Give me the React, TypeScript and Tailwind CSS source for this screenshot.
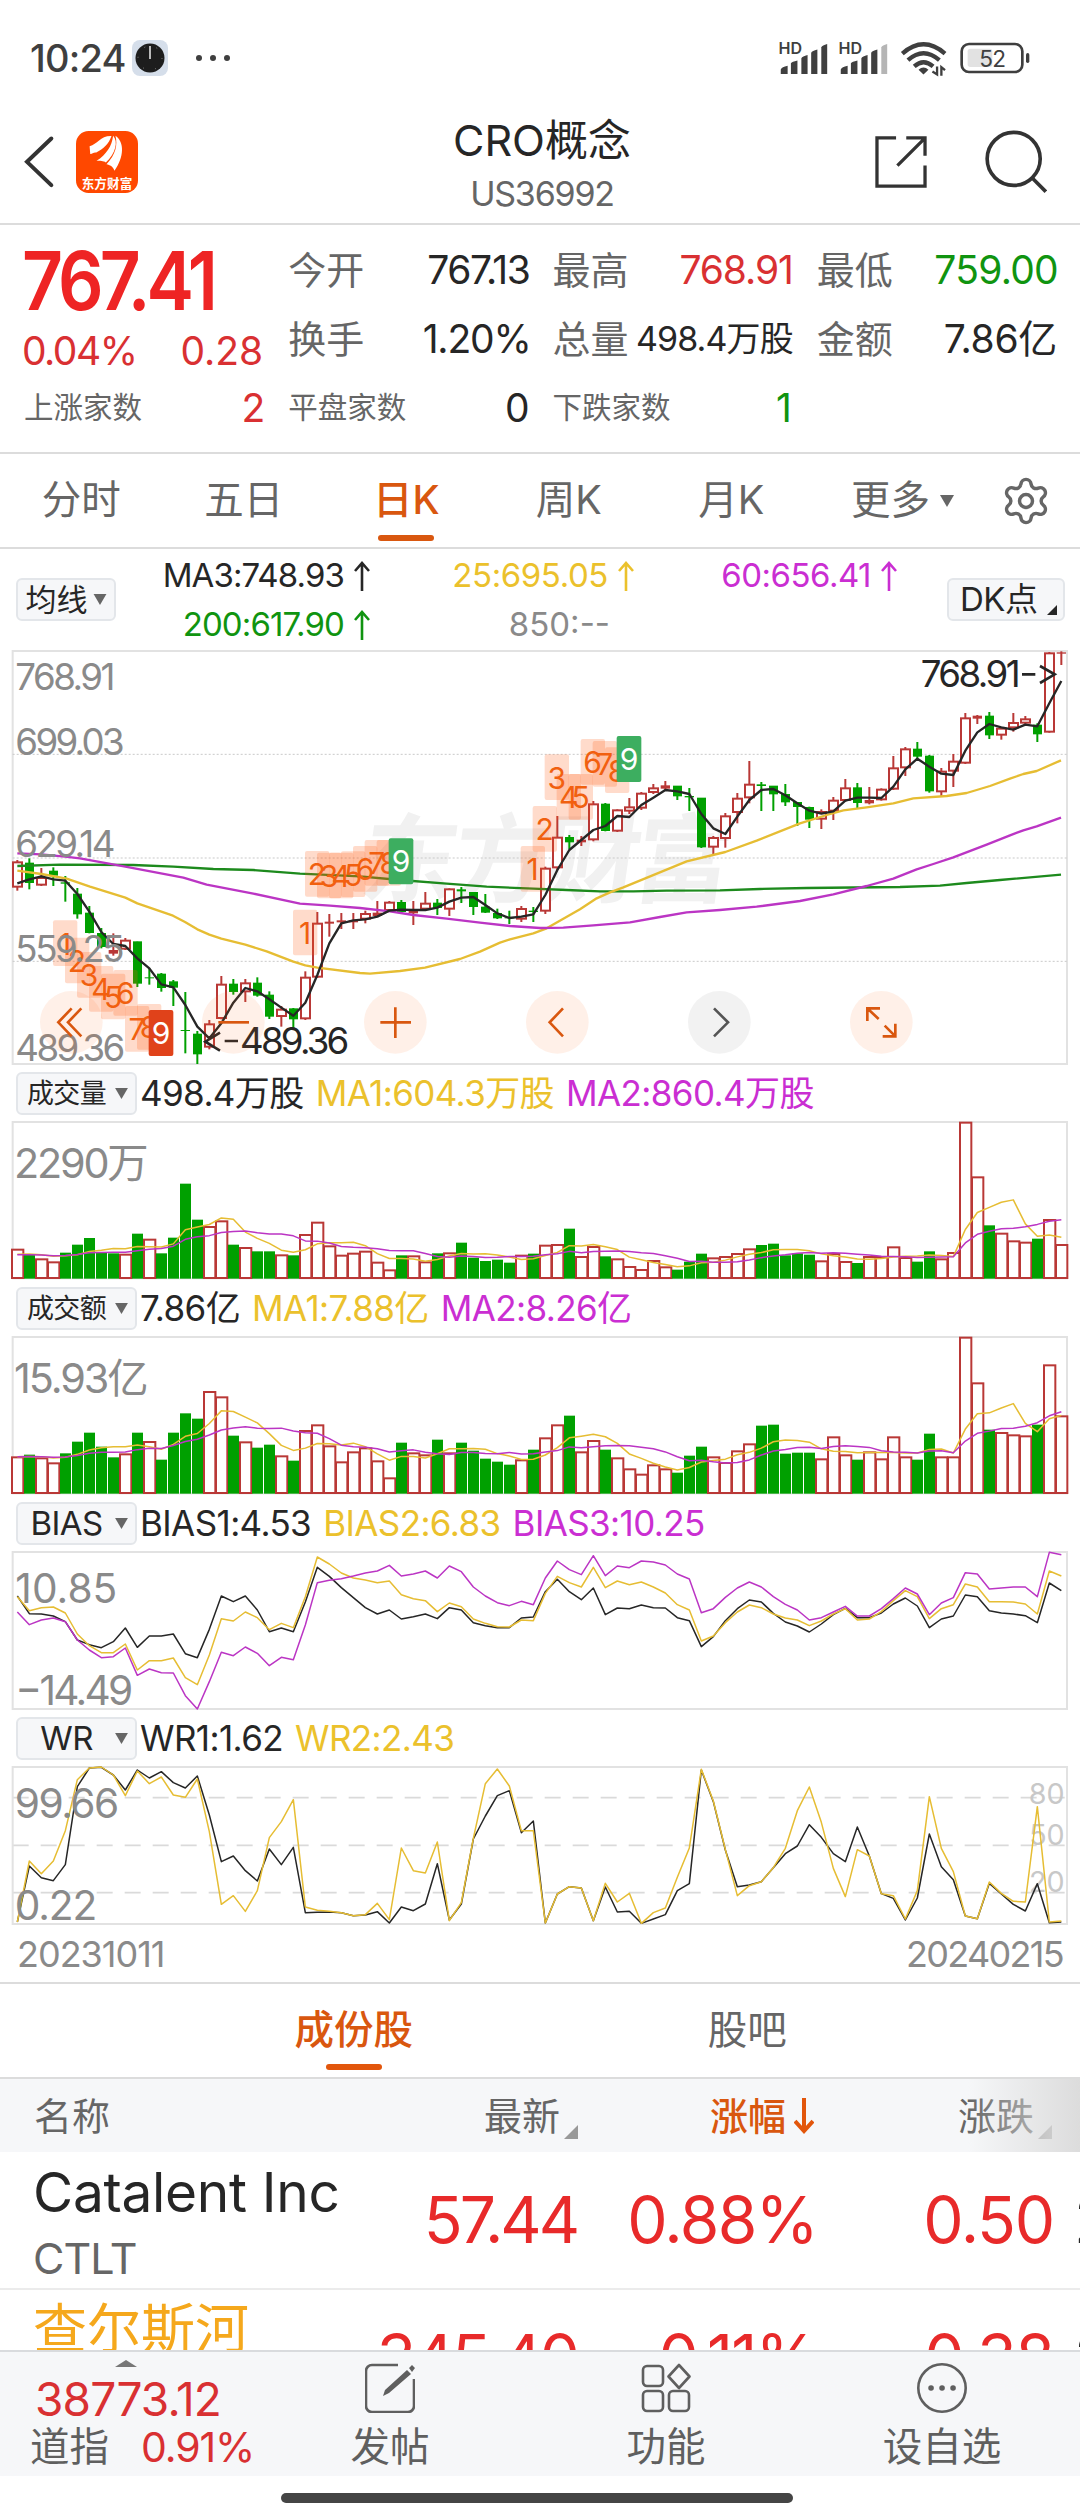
import type { ReactNode } from "react";
import { Settings } from "lucide-react";

const RED = "#b93836";
const GREEN = "#00a000";
const BLACK = "#262626";
const YELLOW = "#e6bd33";
const PURPLE = "#bb35c4";

// every pane is drawn at 3 units per pixel, one day every 36 units
const dayX = (i: number) => 52 + i * 36;

// [high, body top, body bottom, low, rising]
const candles = [
  [660, 665, 742, 752, 1], [655, 669, 728, 748, 0], [684, 712, 736, 738, 1], [682, 693, 706, 738, 0],
  [708, 727, 731, 785, 0], [744, 762, 822, 836, 0], [798, 819, 878, 880, 0], [864, 880, 920, 925, 0],
  [880, 930, 941, 947, 1], [894, 900, 928, 930, 1], [905, 905, 1030, 1041, 0], [985, 1012, 1014, 1034, 0],
  [999, 1002, 1043, 1055, 0], [1020, 1025, 1042, 1098, 0], [1056, 1170, 1173, 1240, 0], [1173, 1182, 1242, 1272, 0],
  [1140, 1151, 1222, 1228, 1], [1008, 1032, 1136, 1138, 1], [1017, 1032, 1055, 1064, 0], [1017, 1028, 1056, 1086, 1],
  [1012, 1029, 1066, 1070, 0], [1054, 1065, 1129, 1137, 0], [1098, 1107, 1130, 1160, 1], [1104, 1106, 1137, 1165, 0],
  [994, 1011, 1137, 1140, 1], [816, 849, 1012, 1014, 1], [822, 845, 851, 890, 1], [819, 841, 847, 867, 1],
  [819, 841, 847, 867, 1], [812, 820, 838, 850, 1], [783, 818, 828, 830, 1], [783, 786, 812, 815, 1],
  [780, 787, 815, 820, 0], [783, 812, 820, 855, 1], [756, 789, 808, 810, 1], [777, 789, 803, 825, 0],
  [745, 746, 808, 828, 1], [741, 748, 754, 789, 0], [756, 757, 800, 825, 0], [762, 801, 817, 819, 0],
  [806, 820, 834, 837, 0], [812, 832, 835, 852, 0], [798, 805, 838, 846, 1], [801, 812, 816, 846, 0],
  [680, 684, 814, 822, 1], [528, 591, 684, 690, 1], [585, 592, 606, 628, 0], [588, 599, 607, 618, 1],
  [483, 491, 600, 604, 1], [489, 492, 572, 574, 0], [508, 509, 574, 576, 1], [474, 500, 514, 522, 1],
  [456, 459, 505, 510, 1], [432, 443, 458, 462, 1], [423, 436, 446, 450, 1], [438, 438, 468, 480, 0],
  [444, 468, 472, 513, 0], [474, 474, 621, 624, 0], [588, 592, 622, 643, 1], [519, 527, 596, 623, 1],
  [459, 474, 518, 550, 1], [363, 432, 474, 490, 1], [426, 433, 438, 513, 0], [438, 438, 462, 513, 0],
  [432, 463, 486, 498, 0], [486, 487, 500, 558, 0], [500, 502, 538, 564, 0], [508, 514, 538, 567, 1],
  [471, 480, 514, 540, 1], [417, 443, 482, 485, 1], [429, 443, 488, 506, 0], [441, 480, 490, 493, 1],
  [445, 447, 480, 482, 1], [348, 383, 448, 450, 1], [321, 326, 384, 408, 1], [306, 327, 349, 356, 0],
  [345, 348, 453, 458, 0], [384, 393, 456, 470, 1], [342, 363, 394, 441, 1], [219, 233, 370, 372, 1],
  [225, 227, 236, 252, 1], [216, 228, 285, 297, 0], [262, 264, 286, 299, 1], [219, 247, 264, 275, 1],
  [228, 236, 250, 257, 1], [250, 255, 282, 306, 0], [36, 38, 277, 278, 1], [34, 37, 41, 75, 1],
];

const ma3 = [
  730, 718, 709, 718, 722, 762, 815, 876, 912, 918, 955, 985, 1033, 1042, 1095, 1160, 1195, 1150, 1088, 1044, 1054, 1078,
  1103, 1127, 1088, 1005, 910, 850, 841, 838, 830, 812, 809, 810, 810, 803, 785, 773, 771, 795, 820, 834, 830, 823, 765,
  690, 630, 600, 570, 558, 528, 531, 495, 473, 450, 454, 462, 522, 565, 582, 530, 480, 450, 447, 466, 490, 512, 521, 514,
  482, 473, 473, 474, 440, 388, 356, 380, 401, 405, 332, 277, 252, 262, 269, 254, 259, 190, 123,
];
const ma25 =
  "52,692 124,702 200,716 270,740 376,773 412,790 519,827 555,846 592,868 628,884 664,896 736,914 800,934 880,965 916,976 952,983 1080,999 1110,1001 1200,993 1275,983 1380,957 1440,935 1500,908 1530,898 1600,880 1640,865 1740,808 1790,775 1830,757 1870,742 2060,664 2176,636 2270,602 2400,550 2480,525 2530,511 2600,502 2680,490 2740,475 2840,468 2900,459 2970,438 3030,416 3070,402 3110,393 3183,361";
const ma60 =
  "52,640 124,643 195,650 240,655 376,680 550,713 620,734 760,761 900,791 990,797 1080,804 1170,814 1240,825 1340,836 1440,848 1530,858 1620,864 1690,863 1780,856 1890,847 1980,831 2060,817 2160,810 2270,800 2400,783 2500,763 2600,738 2680,716 2750,688 2800,672 2860,652 2960,614 3030,586 3070,571 3110,559 3183,533";
const ma200 =
  "52,678 180,674 400,675 520,680 640,687 760,690 900,701 1080,709 1200,720 1340,731 1460,740 1600,746 1700,750 1800,754 1900,754 2000,752 2160,751 2280,747 2420,744 2700,741 2820,737 2900,729 3000,720 3183,704";

// sequence marks: [x, y, digit]
const marks: [number, number, number][] = [
  [159, 841, 1], [195, 893, 2], [231, 936, 3], [267, 978, 4], [303, 1001, 5], [340, 990, 6], [375, 1098, 7], [411, 1092, 8],
  [879, 809, 1], [915, 633, 2], [951, 638, 3], [987, 638, 4], [1023, 634, 5], [1059, 618, 6], [1094, 600, 7], [1130, 600, 8],
  [1562, 618, 1], [1598, 498, 2], [1634, 343, 3], [1670, 402, 4], [1706, 402, 5], [1742, 297, 6], [1778, 303, 7], [1815, 322, 8],
];

const rising = [
  1, 0, 1, 1, 0, 0, 0, 0, 0, 1, 0, 1, 0, 0, 0, 0, 1, 1, 0, 1, 0, 0, 1, 0, 1, 1, 1, 1, 1, 1, 1, 1, 0, 1, 1, 0, 1, 0, 0, 0, 0, 0,
  1, 0, 1, 1, 0, 1, 1, 0, 1, 1, 1, 1, 1, 0, 0, 0, 1, 1, 1, 1, 0, 0, 0, 0, 0, 1, 1, 1, 0, 1, 1, 1, 1, 0, 0, 1, 1, 1, 1, 0, 1, 1,
  1, 0, 1, 1,
];
const volume = [
  538, 555, 567, 576, 549, 525, 505, 548, 551, 553, 492, 508, 551, 504, 342, 450, 470, 453, 525, 533, 545, 545, 555, 557,
  494, 457, 528, 556, 550, 544, 577, 600, 557, 558, 576, 551, 549, 519, 564, 574, 570, 579, 556, 552, 526, 524, 477, 560,
  530, 560, 567, 590, 599, 572, 591, 600, 576, 552, 564, 560, 551, 537, 526, 522, 557, 551, 555, 573, 551, 575, 580, 560,
  560, 531, 563, 576, 545, 567, 548, 157, 321, 467, 490, 513, 517, 507, 449, 524,
];
const amount = [
  1161, 1155, 1164, 1179, 1151, 1116, 1089, 1131, 1163, 1152, 1089, 1115, 1170, 1089, 1031, 1047, 965, 981, 1098, 1116,
  1134, 1125, 1158, 1173, 1082, 1065, 1128, 1176, 1146, 1134, 1173, 1224, 1119, 1149, 1155, 1110, 1149, 1119, 1143, 1167,
  1176, 1185, 1170, 1140, 1104, 1065, 1038, 1146, 1112, 1140, 1164, 1197, 1213, 1185, 1197, 1209, 1158, 1131, 1161, 1178,
  1143, 1122, 1068, 1065, 1152, 1149, 1149, 1167, 1101, 1155, 1170, 1146, 1167, 1101, 1161, 1170, 1092, 1161, 1161, 802,
  939, 1080, 1088, 1095, 1098, 1065, 885, 1038,
];

const bias1 = [
  288, 341, 342, 348, 365, 420, 434, 443, 425, 384, 442, 408, 408, 402, 461, 473, 388, 288, 305, 288, 330, 395, 384, 395,
  306, 202, 229, 263, 293, 323, 342, 330, 357, 350, 342, 356, 323, 330, 368, 377, 383, 383, 354, 351, 275, 238, 275, 299,
  264, 344, 324, 326, 315, 323, 324, 353, 362, 440, 410, 362, 326, 300, 306, 340, 366, 378, 396, 372, 344, 325, 353, 353,
  339, 312, 294, 318, 383, 357, 348, 285, 290, 332, 339, 342, 347, 368, 249, 272,
];
const bias2 = [
  290, 332, 323, 321, 339, 402, 437, 458, 458, 432, 510, 482, 482, 474, 533, 554, 465, 356, 363, 336, 353, 389, 370, 383,
  290, 171, 192, 219, 234, 240, 248, 243, 284, 296, 302, 335, 309, 320, 357, 370, 380, 381, 360, 362, 280, 229, 248, 261,
  202, 263, 243, 254, 246, 261, 279, 314, 330, 423, 408, 368, 336, 315, 323, 342, 354, 360, 377, 363, 342, 326, 360, 357,
  335, 302, 272, 290, 356, 326, 314, 252, 261, 305, 305, 306, 312, 342, 213, 228,
];
const bias3 = [
  336, 374, 360, 354, 365, 420, 450, 473, 470, 444, 526, 507, 518, 519, 587, 627, 545, 457, 467, 441, 460, 497, 472, 479,
  375, 248, 241, 236, 228, 219, 213, 196, 228, 222, 213, 234, 198, 215, 261, 288, 308, 317, 304, 314, 234, 183, 209, 224,
  167, 227, 198, 203, 183, 186, 195, 222, 237, 338, 326, 292, 264, 246, 261, 290, 313, 330, 360, 353, 336, 319, 348, 348,
  326, 296, 264, 282, 344, 309, 293, 218, 222, 267, 264, 261, 261, 290, 157, 164,
];
const wr1 = [
  1266, 1098, 1133, 1142, 1094, 860, 804, 802, 825, 870, 810, 834, 815, 848, 864, 828, 945, 1085, 1068, 1112, 1143, 1047,
  1094, 1042, 1238, 1237, 1236, 1238, 1247, 1245, 1235, 1269, 1221, 1232, 1212, 1091, 1260, 1212, 1017, 948, 887, 872, 998,
  963, 1269, 1182, 1160, 1164, 1262, 1161, 1236, 1234, 1270, 1257, 1244, 1172, 1151, 810, 905, 1050, 1160, 1155, 1145,
  1103, 1061, 1038, 974, 1012, 1061, 1085, 981, 1068, 1181, 1195, 1260, 1194, 1002, 1100, 1139, 1248, 1256, 1150, 1182,
  1213, 1233, 1151, 1268, 1266,
];
const wr2 = [
  1266, 1083, 1121, 1083, 992, 839, 804, 801, 825, 887, 813, 851, 831, 885, 892, 837, 995, 1213, 1187, 1234, 1172, 1013,
  965, 899, 1221, 1231, 1234, 1238, 1247, 1244, 1210, 1259, 1044, 1112, 1119, 1026, 1262, 1208, 1015, 851, 807, 858, 992,
  992, 1269, 1182, 1160, 1164, 1262, 1150, 1206, 1180, 1270, 1238, 1224, 1132, 1044, 808, 903, 1048, 1187, 1157, 1145,
  1103, 1045, 932, 861, 967, 1105, 1190, 1049, 1068, 1181, 1187, 1257, 1172, 890, 1045, 1115, 1248, 1256, 1146, 1180,
  1204, 1206, 920, 1266, 1263,
];

const points = (ys: number[]) => ys.map((y, i) => `${dayX(i)},${y}`).join(" ");

// rolling mean, padded in front with the level before the first visible day
const average = (ys: number[], n: number, before: number) =>
  ys.map((_, i) => {
    let sum = 0;
    for (let k = i - n + 1; k <= i; k++) sum += k < 0 ? before : ys[k];
    return sum / n;
  });

const Line = ({ d, color, width = 4.5 }: { d: string; color: string; width?: number }) => (
  <polyline points={d} fill="none" stroke={color} strokeWidth={width} strokeLinejoin="round" />
);

const Label = ({ x, y, w, children, color = "#8a8a8a", size = 110 }: {
  x: number; y: number; w: number; children: string; color?: string; size?: number;
}) => (
  <text x={x} y={y} fontSize={size} fill={color} textLength={w}>
    {children}
  </text>
);

const Frame = ({ top, bottom }: { top: number; bottom: number }) => (
  <rect x={38} y={top} width={3163} height={bottom - top} fill="none" stroke="#e2e2e2" strokeWidth={6} />
);

const DownTriangle = ({ className }: { className: string }) => (
  <svg viewBox="0 0 14 12" className={className} fill="#666">
    <path d="M0 0h14L7 12z" />
  </svg>
);

const CornerTriangle = ({ className }: { className: string }) => (
  <svg viewBox="0 0 14 14" className={className} fill="currentColor">
    <path d="M14 0v14H0z" />
  </svg>
);

const Signal = ({ weak }: { weak?: boolean }) => (
  <svg viewBox="54 60 150 104" className="h-[34px] w-[50px]" fill="#3f3f3f">
    <text x={54} y={101} fontSize={47} fontWeight={600} textLength={72} lengthAdjust="spacingAndGlyphs">
      HD
    </text>
    <path d="M61 161v-14q3-7 21-11v25z M92 161v-33q3-4 20-8v41z M124 161v-48q3-6 19-10v58z M154 161V96q3-6 19-10v75z" />
    <path d="M185 161V79q3-6 18-10v92z" fill={weak ? "#b5b5b5" : "#3f3f3f"} />
  </svg>
);

const StatusBar = () => (
  <div className="flex h-[108px] items-center justify-between pt-2 pr-[50px] pl-[30px]">
    <div className="flex items-center">
      <span className="text-[38px] leading-none font-medium tracking-[-0.8px] text-[#3f3f3f]">10:24</span>
      <svg viewBox="0 0 36 36" className="ml-[6px] h-9 w-9">
        <rect width="36" height="36" rx="8" fill="#d5deea" />
        <circle cx="18" cy="18" r="14.5" fill="#1d1d1d" />
        <circle cx="18" cy="18" r="12" fill="none" stroke="#888" strokeWidth="1" strokeDasharray="1 11.57" />
        <path d="M18 6v13" stroke="#bbb" strokeWidth="2" />
      </svg>
      <svg viewBox="0 0 34 6" className="ml-7 h-[6px] w-[34px]" fill="#3f3f3f">
        <circle cx="3" cy="3" r="3" />
        <circle cx="17" cy="3" r="3" />
        <circle cx="31" cy="3" r="3" />
      </svg>
    </div>
    <div className="flex items-center">
      <Signal />
      <span className="w-[10px]" />
      <Signal weak />
      <svg viewBox="420 62 142 110" className="ml-[12px] h-[37px] w-[47px]" fill="none" stroke="#3f3f3f" strokeWidth="13">
        <path d="M427 102q64-56 129 0M444 122q47-42 95 0M463 141q28-25 57 0" />
        <path d="M476 151q15-13 30 0l-15 14z" fill="#3f3f3f" stroke="none" />
        <path d="M532 141v24l-14-9M545 169v-26l11 9" strokeWidth="7" />
      </svg>
      <svg viewBox="604 66 210 96" className="ml-[13px] h-8 w-[70px]">
        <rect x="609" y="72" width="182" height="84" rx="22" fill="none" stroke="#3f3f3f" strokeWidth="8" />
        <rect x="627" y="86" width="74" height="55" rx="8" fill="#e2e2e2" />
        <rect x="802" y="99" width="10" height="30" rx="5" fill="#3f3f3f" />
        <text x="701" y="140" fontSize="68" textAnchor="middle" fill="#3f3f3f" letterSpacing="-2">
          52
        </text>
      </svg>
    </div>
  </div>
);

const Header = () => (
  <div className="flex h-[117px] items-center justify-between border-b-2 border-[#dcdcdc] pr-[33px] pl-[23px]">
    <div className="mb-2 flex w-[302px] items-center">
      <svg viewBox="70 346 96 158" className="h-[53px] w-8" fill="none" stroke="#333" strokeWidth="12" strokeLinecap="round">
        <path d="M155 356L82 426l73 70" />
      </svg>
      <svg viewBox="0 0 187 187" className="ml-[21px] h-[62px] w-[62px]" fill="#fff">
        <rect width="187" height="187" rx="38" fill="#ff4800" />
        <path d="M41 46c24-6 32-32 66-31-8 24-24 38-46 50-8-2-14 6-18 4z" />
        <path d="M62 90c30-20 46-44 50-76 16 18 8 52-22 81-7-6-18-3-28-5z" />
        <path d="M92 100c28-30 34-58 27-86 28 20 26 64-3 106-4-14-14-18-24-20z" />
        <text x="17" y="172" fontSize="38" fontWeight="700" textLength="153">
          东方财富
        </text>
      </svg>
    </div>
    <div className="pt-[3px] text-center leading-[53px]">
      <div className="text-[43px] text-[#262626]">CRO概念</div>
      <div className="text-[34px] tracking-[-1.2px] text-[#666]">US36992</div>
    </div>
    <div className="mb-2 flex w-[288px] items-center justify-end gap-[58px]">
      <svg viewBox="346 346 158 158" className="h-[52px] w-[52px]" fill="none" stroke="#333" strokeWidth="10">
        <path d="M410 352h-58v146h146v-62M441 352h57v54M497 353l-83 83" />
      </svg>
      <svg viewBox="678 328 186 190" className="h-[63px] w-[62px]" fill="none" stroke="#333" strokeWidth="11">
        <circle cx="764" cy="415" r="80" />
        <path d="M820 473l41 41" />
      </svg>
    </div>
  </div>
);

const Stat = ({ label, value, small }: { label: string; value: ReactNode; small?: boolean }) => (
  <div className="flex h-[69px] items-center justify-between whitespace-nowrap text-[#262626]">
    <span className={small ? "text-[29.5px] text-[#666]" : "text-[38px] text-[#666]"}>{label}</span>
    {value}
  </div>
);

const Quote = () => (
  <div className="grid h-[229px] grid-cols-4 gap-x-[25px] border-b-2 border-[#dcdcdc] px-6 pt-[10px] text-[39px] leading-none">
    <div className="text-[#d93032]">
      <div className="flex h-[93px] items-center">
        <span className="-ml-[2px] origin-left scale-x-[0.88] text-[81px] font-semibold tracking-[-4.5px] text-[#ee2424]">
          767.41
        </span>
      </div>
      <div className="flex h-[45px] items-center justify-between">
        <span className="-ml-[2px] tracking-[-1.5px]">0.04%</span>
        <span>0.28</span>
      </div>
      <Stat small label="上涨家数" value={<span className="-mr-[2px] text-[#d93032]">2</span>} />
    </div>
    <div>
      <Stat label="今开" value={<span className="-mr-[2px] tracking-[-1.4px]">767.13</span>} />
      <Stat label="换手" value={<span className="-mr-[3px] tracking-[-1.2px]">1.20%</span>} />
      <Stat small label="平盘家数" value={<span className="-mr-[2px]">0</span>} />
    </div>
    <div>
      <Stat label="最高" value={<span className="-mr-px tracking-[-1.1px] text-[#d93032]">768.91</span>} />
      <Stat label="总量" value={<span className="-mr-px text-[34px] tracking-[-0.9px]">498.4万股</span>} />
      <Stat small label="下跌家数" value={<span className="text-[#109410]">1</span>} />
    </div>
    <div>
      <Stat label="最低" value={<span className="-mr-[2px] tracking-[-0.7px] text-[#109410]">759.00</span>} />
      <Stat label="金额" value={<span className="-mr-px tracking-[-0.3px]">7.86亿</span>} />
    </div>
  </div>
);

const PeriodTabs = () => (
  <div className="flex h-[95px] items-center border-b-2 border-[#dcdcdc] text-[39.5px] leading-none text-[#666]">
    {["分时", "五日", "日K", "周K", "月K"].map((t) => (
      <div
        key={t}
        className={
          t === "日K"
            ? "relative flex h-full w-[162.5px] items-center justify-center font-medium text-[#d9570f]"
            : "flex h-full w-[162.5px] items-center justify-center"
        }
      >
        {t}
        {t === "日K" && <span className="absolute bottom-[6px] h-[6px] w-14 rounded-full bg-[#d9570f]" />}
      </div>
    ))}
    <div className="flex w-[180px] items-center justify-center gap-[10px]">
      更多
      <DownTriangle className="h-3 w-[14px]" />
    </div>
    <Settings className="ml-[7px] h-[52px] w-[52px]" strokeWidth={1.6} />
  </div>
);

const UpArrow = () => (
  <svg viewBox="0 0 16 30" className="ml-[10px] h-[30px] w-4" fill="none" stroke="currentColor" strokeWidth="2.6">
    <path d="M8 30V2M1 10l7-8 7 8" />
  </svg>
);

const MaLegend = () => (
  <div className="flex h-[101px] items-center pl-4 text-[33px] leading-none text-[#262626]">
    <div className="flex h-[43px] w-[100px] items-center justify-center gap-[5px] rounded-md border-2 border-[#e3e6ea] bg-[#f6f7f9] text-[31px]">
      均线
      <DownTriangle className="h-[11px] w-[14px]" />
    </div>
    <div className="grid grid-cols-[254px_264px_263px] pt-px whitespace-nowrap">
      <div className="flex h-[49px] items-center justify-end tracking-[-0.9px]">
        MA3:748.93
        <UpArrow />
      </div>
      <div className="flex h-[49px] items-center justify-end tracking-[-0.4px] text-[#ebc12c]">
        25:695.05
        <UpArrow />
      </div>
      <div className="flex h-[49px] items-center justify-end tracking-[-0.5px] text-[#ca2ed2]">
        60:656.41
        <UpArrow />
      </div>
      <div className="flex h-[49px] items-center justify-end tracking-[-0.9px] text-[#109410]">
        200:617.90
        <UpArrow />
      </div>
      <div className="flex h-[49px] items-center justify-end pr-[24px] text-[#8a8a8a]">850:--</div>
    </div>
    <div className="ml-[50px] flex h-[43px] w-[118px] items-center rounded-md border-2 border-[#e3e6ea] bg-[#f6f7f9] pl-[11px]">
      <span className="tracking-[-0.5px]">DK点</span>
      <CornerTriangle className="mt-5 ml-[9px] h-[10px] w-[10px]" />
    </div>
  </div>
);

const ChartButton = ({ x, gray, children }: { x: number; gray?: boolean; children: ReactNode }) => (
  <g transform={`translate(${x} 1147)`} fill="none" stroke={gray ? "#555" : "#d9570f"} strokeWidth={8}>
    <circle r={94} fill={gray ? "#808080" : "#ff6e1e"} fillOpacity={0.1} stroke="none" />
    {children}
  </g>
);

const MainChart = () => (
  <svg viewBox="0 30 3240 1248" className="block h-[416px] w-full">
    <text x={1180} y={765} fontSize={290} fontWeight={700} fill="#f1f1f1" textLength={1110} transform="skewX(-8)">
      东方财富
    </text>
    <Frame top={33} bottom={1272} />
    {[343, 654, 964].map((y) => (
      <path key={y} d={`M38 ${y}H3201`} stroke="#c9c9c9" strokeWidth={3} strokeDasharray="6 6" />
    ))}
    {candles.map(([high, top, bottom, low, up], i) => (
      <g key={i} stroke={up ? RED : GREEN} strokeWidth={6}>
        <path d={`M${dayX(i)} ${high}V${low}`} />
        {bottom - top < 12 ? (
          <rect x={dayX(i) - 14} y={top} width={28} height={Math.max(bottom - top, 3)} stroke="none" fill={up ? RED : GREEN} />
        ) : (
          <rect
            x={dayX(i) - (up ? 13 : 10)}
            y={top + 2}
            width={up ? 27 : 21}
            height={bottom - top - 4}
            fill={up ? "#fff" : GREEN}
          />
        )}
      </g>
    ))}
    <Line d={ma200} color="#1d8a1d" width={7} />
    <Line d={ma25} color={YELLOW} width={7} />
    <Line d={ma60} color={PURPLE} width={7} />
    <Line d={points(ma3)} color={BLACK} width={7} />
    {marks.map(([x, y, n], i) => (
      <g key={i}>
        <rect x={x} y={y} width={73} height={137} rx={6} fill="#ff5a14" fillOpacity={0.22} />
        <text x={x + 36} y={y + 103} fontSize={90} textAnchor="middle" fill="#f0600f">
          {n}
        </text>
      </g>
    ))}
    {[[446, 1110, "#e0421a"], [1166, 595, "#3dae60"], [1850, 288, "#3dae60"]].map(([x, y, c]) => (
      <g key={x}>
        <rect x={x} y={y} width={74} height={138} rx={6} fill={c as string} />
        <text x={Number(x) + 37} y={Number(y) + 102} fontSize={90} textAnchor="middle" fill="#fff">
          9
        </text>
      </g>
    ))}
    <Label x={46} y={150} w={300}>768.91</Label>
    <Label x={46} y={345} w={328}>699.03</Label>
    <Label x={46} y={652} w={300}>629.14</Label>
    <Label x={46} y={966} w={328}>559.25</Label>
    <Label x={46} y={1263} w={330}>489.36</Label>
    <Label x={720} y={1243} w={328} color={BLACK}>489.36</Label>
    <path d="M660 1178l-44 27 44 27M674 1203h40" stroke={BLACK} strokeWidth={8} fill="none" />
    <Label x={2762} y={142} w={300} color={BLACK}>768.91</Label>
    <path d="M3120 78l44 25-44 26M3066 103h40" stroke={BLACK} strokeWidth={8} fill="none" />
    <ChartButton x={214}>
      <path d="M1-42l-40 42 40 42M30-42l-40 42 40 42" />
    </ChartButton>
    <ChartButton x={700}>
      <path d="M-45 0h92" />
    </ChartButton>
    <ChartButton x={1186}>
      <path d="M-45 0h92M0-45v92" />
    </ChartButton>
    <ChartButton x={1672}>
      <path d="M17-42l-40 42 40 42" />
    </ChartButton>
    <ChartButton x={2158} gray>
      <path d="M-16-42l42 42-42 42" />
    </ChartButton>
    <ChartButton x={2644}>
      <path d="M-4-42h-38v38M-40-40l32 30M4 42h38V4M40 40L10 10" />
    </ChartButton>
  </svg>
);

const BarPane = ({ tops, base, before, max }: { tops: number[]; base: number; before: number; max: string }) => (
  <svg viewBox={`0 ${base - 475} 3240 483`} className="block h-[161px] w-full">
    <Frame top={base - 469} bottom={base} />
    {tops.map((y, i) =>
      rising[i] ? (
        <rect key={i} x={dayX(i) - 16} y={y + 1} width={34} height={base - y - 2} fill="#fff" stroke={RED} strokeWidth={6} />
      ) : (
        <rect key={i} x={dayX(i) - 16} y={y - 1} width={33} height={base - y + 2} fill={GREEN} />
      ),
    )}
    <Line d={points(average(tops, 5, before))} color={YELLOW} />
    <Line d={points(average(tops, 10, before))} color={PURPLE} />
    <Label x={42} y={base - 302} w={404} size={124}>{max}</Label>
  </svg>
);

const BiasPane = () => (
  <svg viewBox="0 150 3240 483" className="block h-[161px] w-full">
    <Frame top={156} bottom={627} />
    <Line d={points(bias1)} color={BLACK} />
    <Line d={points(bias2)} color={YELLOW} />
    <Line d={points(bias3)} color={PURPLE} />
    <Label x={46} y={308} w={306} size={122}>10.85</Label>
    <Label x={46} y={614} w={354} size={122}>−14.49</Label>
  </svg>
);

const WrPane = () => (
  <svg viewBox="0 795 3240 483" className="block h-[161px] w-full">
    {[893, 1036, 1178].map((y) => (
      <path key={y} d={`M38 ${y}H3201`} stroke="#dadada" strokeWidth={5} strokeDasharray="48 36" />
    ))}
    <Frame top={801} bottom={1272} />
    {[["80", 912], ["50", 1035], ["20", 1176]].map(([t, y]) => (
      <text key={t} x={3194} y={y} fontSize={86} fill="#c8c8c8" textAnchor="end">
        {t}
      </text>
    ))}
    <Line d={points(wr1)} color={BLACK} />
    <Line d={points(wr2)} color={YELLOW} />
    <Label x={44} y={953} w={314} size={122}>99.66</Label>
    <Label x={44} y={1259} w={248} size={122}>0.22</Label>
  </svg>
);

const PaneHeader = ({ name, values }: { name: string; values: string[] }) => (
  <div className="flex h-[54px] items-center pt-px pl-4 text-[35px] leading-none tracking-[-0.6px] whitespace-nowrap">
    <div className="flex h-[43px] w-[121px] items-center rounded-md border-2 border-[#e3e6ea] bg-[#f6f7f9] pr-[7px] text-[#262626]">
      <span className={name === "BIAS" || name === "WR" ? "flex-1 text-center text-[33px]" : "flex-1 text-center text-[27px]"}>
        {name}
      </span>
      <DownTriangle className="h-[11px] w-[13px]" />
    </div>
    <div className="ml-[3px] flex gap-3">
      {values.map((v, i) => (
        <span key={v} className={["text-[#262626]", "text-[#ebc12c]", "text-[#ca2ed2]"][i]}>
          {v}
        </span>
      ))}
    </div>
  </div>
);

const SortTriangle = () => <CornerTriangle className="mt-8 ml-[4px] h-[14px] w-[14px] text-[#999]" />;

const StockRow = ({ name, code, price, pct, diff, highlight }: {
  name: string; code: string; price: string; pct: string; diff: string; highlight?: boolean;
}) => (
  <div className="flex h-[138px] shrink-0 items-center overflow-hidden border-b-2 border-[#ebebeb] pl-[33px] text-[64px] leading-none whitespace-nowrap text-[#e82a2a]">
    <div className="w-[302px] shrink-0 pt-[10px] leading-[66px]">
      <div className={highlight ? "text-[54px] text-[#f5a81c]" : "text-[55px] tracking-[-0.3px] text-[#262626]"}>{name}</div>
      <div className="text-[43px] tracking-[-0.9px] text-[#666]">{code}</div>
    </div>
    <div className="w-[242px] shrink-0 text-right tracking-[-3px]">{price}</div>
    <div className="w-[240px] shrink-0 text-right tracking-[-1.6px]">{pct}</div>
    <div className="w-[237px] shrink-0 text-right tracking-[-1.2px]">{diff}</div>
    <div className="ml-[20px] text-[#262626]">2</div>
  </div>
);

const StockList = () => (
  <>
    <div className="flex h-[95px] items-center border-b-2 border-[#dcdcdc] pr-[136px] pl-[157px] text-[39.5px] leading-none text-[#666]">
      <div className="relative flex h-full flex-1 items-center justify-center font-medium text-[#d9570f]">
        成份股
        <span className="absolute bottom-[7px] h-[6px] w-14 rounded-full bg-[#e2560c]" />
      </div>
      <div className="flex-1 text-center">股吧</div>
    </div>
    <div className="relative flex h-[73px] items-center bg-[#f6f7f9] pl-[34px] text-[38px] leading-none text-[#666]">
      <div className="w-[300px]">名称</div>
      <div className="flex w-[244px] items-center justify-end">
        最新
        <SortTriangle />
      </div>
      <div className="flex w-[236px] items-center justify-end text-[#d9570f]">
        <span className="font-medium">涨幅</span>
        <svg viewBox="0 0 20 36" className="ml-2 h-9 w-5" fill="none" stroke="#e2560c" strokeWidth="4">
          <path d="M10 0v33M1 23l9 10 9-10" />
        </svg>
      </div>
      <div className="flex w-[238px] items-center justify-end">
        涨跌
        <SortTriangle />
      </div>
      <div className="absolute inset-y-0 right-0 w-28 bg-linear-to-r from-transparent to-[#dcdcdc]" />
    </div>
    <StockRow name="Catalent Inc" code="CTLT" price="57.44" pct="0.88%" diff="0.50" />
    <div className="h-[60px] overflow-hidden">
      <StockRow highlight name="查尔斯河" code="CRL" price="345.40" pct="0.11%" diff="0.38" />
    </div>
  </>
);

const Action = ({ label, children }: { label: string; children: ReactNode }) => (
  <div className="flex w-[276px] flex-col items-center pt-[11px]">
    <svg viewBox="0 0 50 50" className="h-[50px] w-[50px]" fill="none" stroke="#5f5f5f" strokeWidth="2.6">
      {children}
    </svg>
    <div className="mt-[14px] leading-[40px]">{label}</div>
  </div>
);

const BottomBar = () => (
  <div className="flex h-[126px] border-t-2 border-[#d9dbde] bg-[#f6f7f9] text-[39.5px] whitespace-nowrap text-[#5f5f5f]">
    <div className="w-[252px] pt-[8px]">
      <svg viewBox="0 0 22 7" className="ml-[115px] h-[7px] w-[22px]" fill="#777">
        <path d="M0 7L11 0l11 7z" />
      </svg>
      <div className="mt-[9px] ml-[35px] text-[46px] leading-[46px] tracking-[-0.8px] text-[#d93032]">38773.12</div>
      <div className="flex pl-[30px] leading-[50px]">
        <span className="shrink-0">道指</span>
        <span className="ml-[32px] text-[41px] tracking-[-1.1px] text-[#d93032]">0.91%</span>
      </div>
    </div>
    <Action label="发帖">
      <path d="M33 2H7a6 6 0 0 0-6 6v35a6 6 0 0 0 6 6h36a6 6 0 0 0 6-6V16" />
      <path d="M18 33l2-6L42 7l4 4-22 19zM44 5l3-3 3 3-3 4z" fill="#5f5f5f" stroke="none" />
    </Action>
    <Action label="功能">
      <rect x="2" y="3" width="20" height="20" rx="4" />
      <rect x="2" y="28" width="20" height="20" rx="4" />
      <rect x="28" y="28" width="20" height="20" rx="4" />
      <path d="M38 2l10.500 11.500L38 25 27.500 13.500z" strokeLinejoin="round" />
    </Action>
    <Action label="设自选">
      <circle cx="25" cy="25" r="23.700" />
      <path d="M14 25h.1M25 25h.1M36 25h.1" strokeWidth="5.500" strokeLinecap="round" />
    </Action>
  </div>
);

export default function App() {
  return (
    <div className="flex h-[2520px] w-[1080px] flex-col overflow-hidden bg-white font-['Inter','Noto_Sans_CJK_SC',sans-serif]">
      <StatusBar />
      <Header />
      <Quote />
      <PeriodTabs />
      <MaLegend />
      <MainChart />
      <PaneHeader name="成交量" values={["498.4万股", "MA1:604.3万股", "MA2:860.4万股"]} />
      <BarPane tops={volume} base={625} before={556} max="2290万" />
      <PaneHeader name="成交额" values={["7.86亿", "MA1:7.88亿", "MA2:8.26亿"]} />
      <BarPane tops={amount} base={1270} before={1160} max="15.93亿" />
      <PaneHeader name="BIAS" values={["BIAS1:4.53", "BIAS2:6.83", "BIAS3:10.25"]} />
      <BiasPane />
      <PaneHeader name="WR" values={["WR1:1.62", "WR2:2.43"]} />
      <WrPane />
      <div className="flex h-[58px] items-center justify-between border-b-2 border-[#dcdcdc] px-[17px] text-[36px] leading-none text-[#8a8a8a]">
        <span className="tracking-[-1px]">20231011</span>
        <span className="tracking-[-1.7px]">20240215</span>
      </div>
      <StockList />
      <BottomBar />
      <div className="flex flex-1 justify-center pt-[17px] pr-1.5">
        <div className="h-[10px] w-[512px] rounded-full bg-[#454545]" />
      </div>
    </div>
  );
}
